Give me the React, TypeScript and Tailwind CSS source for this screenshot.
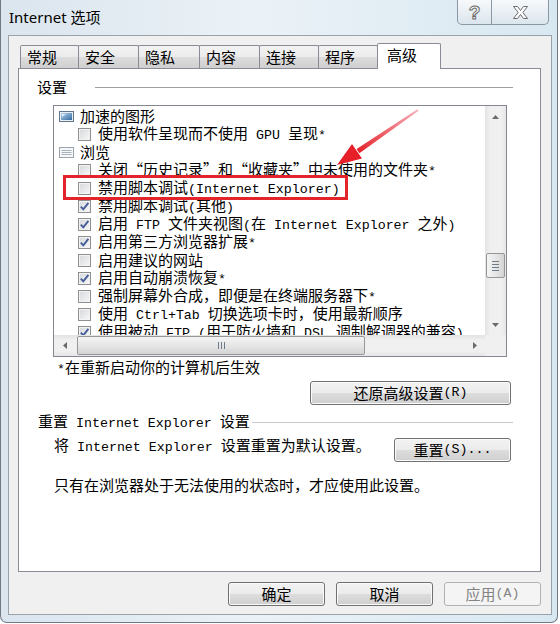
import React from "react";

const CJK = "font-['Noto_Sans_CJK_SC',sans-serif]";

// SimSun-like text: CJK at 15px, ASCII runs in half-width mono
function Txt({ s }: { s: string }) {
  const parts = s.match(/[\x20-\x7e]+|“|”|[^\x20-\x7e“”]+/g) ?? [];
  return (
    <>
      {parts.map((p, i) => {
        if (/^[\x20-\x7e]+$/.test(p))
          return (
            <span key={i} className="font-['Liberation_Mono',monospace] text-[13.3px] whitespace-pre">
              {p}
            </span>
          );
        if (p === "“")
          return (
            <span key={i} className="inline-block w-[15px] text-right">
              “
            </span>
          );
        if (p === "”")
          return (
            <span key={i} className="inline-block w-[15px] text-left">
              ”
            </span>
          );
        return <span key={i}>{p}</span>;
      })}
    </>
  );
}

type Row =
  | { kind: "cat"; icon: "gpu" | "page"; text: string }
  | { kind: "item"; checked: boolean; text: string };

const rows: Row[] = [
  { kind: "cat", icon: "gpu", text: "加速的图形" },
  { kind: "item", checked: false, text: "使用软件呈现而不使用 GPU 呈现*" },
  { kind: "cat", icon: "page", text: "浏览" },
  { kind: "item", checked: false, text: "关闭“历史记录”和“收藏夹”中未使用的文件夹*" },
  { kind: "item", checked: false, text: "禁用脚本调试(Internet Explorer)" },
  { kind: "item", checked: true, text: "禁用脚本调试(其他)" },
  { kind: "item", checked: true, text: "启用 FTP 文件夹视图(在 Internet Explorer 之外)" },
  { kind: "item", checked: true, text: "启用第三方浏览器扩展*" },
  { kind: "item", checked: false, text: "启用建议的网站" },
  { kind: "item", checked: true, text: "启用自动崩溃恢复*" },
  { kind: "item", checked: false, text: "强制屏幕外合成，即便是在终端服务器下*" },
  { kind: "item", checked: false, text: "使用 Ctrl+Tab 切换选项卡时，使用最新顺序" },
  { kind: "item", checked: true, text: "使用被动 FTP (用于防火墙和 DSL 调制解调器的兼容)" },
];

function CatIcon({ icon }: { icon: "gpu" | "page" }) {
  if (icon === "gpu")
    return (
      <svg width="15" height="11" viewBox="0 0 15 11">
        <defs>
          <linearGradient id="scr" x1="0" y1="0" x2="1" y2="1">
            <stop offset="0" stopColor="#b9d6f0" />
            <stop offset="1" stopColor="#2f679f" />
          </linearGradient>
        </defs>
        <rect x="0.5" y="0.5" width="14" height="10" fill="#e9eef3" stroke="#62758b" />
        <rect x="2" y="2" width="11" height="7" fill="url(#scr)" />
        <path d="M3 3 L7 3 L3 6 Z" fill="#ffffff" opacity="0.7" />
      </svg>
    );
  return (
    <svg width="15" height="11" viewBox="0 0 15 11">
      <rect x="0.5" y="0.5" width="14" height="10" fill="#f6f7f9" stroke="#9ba4ae" />
      <path d="M2.5 3.5 H12.5 M2.5 5.5 H12.5 M2.5 7.5 H12.5" stroke="#a9b1ba" />
    </svg>
  );
}

function Check({ on }: { on: boolean }) {
  return (
    <span className="ml-[24px] w-[13px] h-[13px] shrink-0 border border-[#8e8f8f] bg-[linear-gradient(135deg,#d5d8dc,#f7f7f7)] shadow-[inset_0_0_0_1px_#f3f3f3] flex items-center justify-center">
      {on && (
        <svg width="11" height="11" viewBox="0 0 11 11">
          <path d="M1.8 5.6 L4.3 8.3 L9.4 1.8" fill="none" stroke="#445c98" strokeWidth="1.9" />
        </svg>
      )}
    </span>
  );
}

function Btn({ className, children, disabled }: { className: string; children: React.ReactNode; disabled?: boolean }) {
  return (
    <div
      className={
        disabled
          ? `h-[24px] flex items-center justify-center rounded-[3px] border border-[#adb2b5] bg-[#f4f4f4] text-[#838383] ${className}`
          : `h-[24px] flex items-center justify-center rounded-[3px] border border-[#707070] bg-[linear-gradient(to_bottom,#f2f2f2_0%,#ebebeb_50%,#dddddd_50%,#cfcfcf_100%)] shadow-[inset_0_0_0_1px_#fbfbfb] ${className}`
      }
    >
      {children}
    </div>
  );
}

function Tab({ w, label }: { w: string; label: string }) {
  return (
    <div
      className={`h-[23px] -ml-px first:ml-0 border border-b-0 border-[#898c95] rounded-t-[2px] bg-[linear-gradient(to_bottom,#f3f3f3_0%,#ebebeb_50%,#dddddd_50%,#cfcfcf_100%)] pl-[6px] leading-[22px] ${w}`}
    >
      {label}
    </div>
  );
}

export default function App() {
  return (
    <div className={`relative w-[560px] h-[624px] bg-white overflow-hidden text-black ${CJK}`}>
      <div className="w-[558px] h-[623px] flex flex-col rounded-b-[7px] border-x border-b border-[#6f7a87] bg-[linear-gradient(to_right,#dbe5ee,#ebf2f7_45%,#d8e8f1)]">
        {/* title bar */}
        <div className="h-[35px] shrink-0 flex items-start">
          <div className="pl-[8px] pt-[7px] text-[15px] leading-[20px] font-['Noto_Sans','Noto_Sans_CJK_SC',sans-serif]">
            Internet 选项
          </div>
          <div className="ml-auto mr-[8px] flex h-[25px] border border-t-0 border-[#8b97a4] rounded-b-[5px] overflow-hidden bg-[linear-gradient(to_bottom,#f7f9fb,#dbe5ed)]">
            <div className="w-[34px] flex items-center justify-center border-r border-[#8b97a4] text-[19px] leading-none font-bold text-white font-['Liberation_Sans',sans-serif] [-webkit-text-stroke:1px_#6a6a6a]">
              ?
            </div>
            <div className="w-[56px] flex items-center justify-center">
              <svg width="17" height="15" viewBox="0 0 17 15">
                <polygon
                  points="1.5,1.5 5.5,1.5 8.5,5.5 11.5,1.5 15.5,1.5 10.8,7.5 15.5,13.5 11.5,13.5 8.5,9.5 5.5,13.5 1.5,13.5 6.2,7.5"
                  fill="#ffffff"
                  stroke="#6a6a6a"
                  strokeWidth="1"
                />
              </svg>
            </div>
          </div>
        </div>

        {/* client area */}
        <div className="ml-[7px] w-[544px] h-[580px] border border-[#9aa2aa] bg-[#f0f0f0] flex flex-col text-[15px] leading-[18px]">
          {/* tabs */}
          <div className="mt-[7px] ml-[11px] h-[25px] flex items-end">
            <Tab w="w-[59px]" label="常规" />
            <Tab w="w-[61px]" label="安全" />
            <Tab w="w-[62px]" label="隐私" />
            <Tab w="w-[61px]" label="内容" />
            <Tab w="w-[60px]" label="连接" />
            <Tab w="w-[60px]" label="程序" />
            <div className="relative z-10 -ml-px -mb-px h-[26px] w-[64px] border border-b-0 border-[#898c95] rounded-t-[2px] bg-white pl-[9px] leading-[22px]">
              高级
            </div>
          </div>

          {/* tab page */}
          <div className="ml-[9px] w-[523px] h-[504px] border border-[#898c95] bg-white flex flex-col">
            <div className="mt-[9px] h-[18px] flex items-center pl-[18px]">
              <span>设置</span>
              <div className="flex-1 ml-[28px] mr-[27px] border-t border-[#a0a0a0]" />
            </div>

            {/* list box */}
            <div className="mt-[9px] ml-[34px] w-[454px] h-[252px] border border-[#828790] grid grid-cols-[431px_21px] grid-rows-[229px_21px]">
              <div className="overflow-hidden pt-[1px]">
                {rows.map((r, i) => (
                  <div key={i} className="h-[18px] flex items-center whitespace-nowrap">
                    {r.kind === "cat" ? (
                      <>
                        <span className="ml-[5px] w-[15px] h-[11px] shrink-0 flex">
                          <CatIcon icon={r.icon} />
                        </span>
                        <span className="ml-[6px]">
                          <Txt s={r.text} />
                        </span>
                      </>
                    ) : (
                      <>
                        <Check on={r.checked} />
                        <span className="ml-[7px]">
                          <Txt s={r.text} />
                        </span>
                      </>
                    )}
                  </div>
                ))}
              </div>

              {/* vertical scrollbar */}
              <div className="flex flex-col bg-[linear-gradient(to_right,#e3e3e3,#f0f0f0_25%,#f0f0f0_75%,#e6e6e6)]">
                <div className="h-[21px] flex items-center justify-center">
                  <svg width="7" height="4" viewBox="0 0 7 4">
                    <polygon points="0,4 3.5,0 7,4" fill="#6a6a6a" />
                  </svg>
                </div>
                <div className="h-[126px]" />
                <div className="mx-[1px] h-[25px] rounded-[2px] border border-[#979797] bg-[linear-gradient(to_right,#f4f4f4,#e6e6e6_50%,#d4d4d4)] flex flex-col items-center justify-center gap-[2px]">
                  <div className="w-[7px] h-[1px] bg-[#6e7b8a]" />
                  <div className="w-[7px] h-[1px] bg-[#6e7b8a]" />
                  <div className="w-[7px] h-[1px] bg-[#6e7b8a]" />
                  <div className="w-[7px] h-[1px] bg-[#6e7b8a]" />
                </div>
                <div className="flex-1" />
                <div className="h-[21px] flex items-center justify-center">
                  <svg width="7" height="4" viewBox="0 0 7 4">
                    <polygon points="0,0 7,0 3.5,4" fill="#6a6a6a" />
                  </svg>
                </div>
              </div>

              {/* horizontal scrollbar */}
              <div className="flex items-center bg-[linear-gradient(to_bottom,#e3e3e3,#f0f0f0_25%,#f0f0f0_75%,#e6e6e6)]">
                <div className="w-[21px] h-full flex items-center justify-center">
                  <svg width="4" height="7" viewBox="0 0 4 7">
                    <polygon points="4,0 0,3.5 4,7" fill="#6a6a6a" />
                  </svg>
                </div>
                <div className="w-[2px]" />
                <div className="w-[288px] h-[19px] rounded-[2px] border border-[#979797] bg-[linear-gradient(to_bottom,#f4f4f4,#e6e6e6_50%,#d4d4d4)] flex items-center justify-center gap-[2px]">
                  <div className="w-[1px] h-[7px] bg-[#6e7b8a]" />
                  <div className="w-[1px] h-[7px] bg-[#6e7b8a]" />
                  <div className="w-[1px] h-[7px] bg-[#6e7b8a]" />
                </div>
                <div className="flex-1" />
                <div className="w-[21px] h-full flex items-center justify-center">
                  <svg width="4" height="7" viewBox="0 0 4 7">
                    <polygon points="0,0 4,3.5 0,7" fill="#6a6a6a" />
                  </svg>
                </div>
              </div>
              <div className="bg-[#f0f0f0]" />
            </div>

            <div className="mt-[1px] pl-[38px] h-[18px] whitespace-nowrap">
              <Txt s="*在重新启动你的计算机后生效" />
            </div>

            <div className="mt-[5px] self-end mr-[29px]">
              <Btn className="w-[201px]">
                <Txt s="还原高级设置(R)" />
              </Btn>
            </div>

            <div className="mt-[8px] h-[18px] flex items-center pl-[19px] whitespace-nowrap">
              <span>
                <Txt s="重置 Internet Explorer 设置" />
              </span>
              <div className="flex-1 ml-[2px] mr-[27px] border-t border-[#c8c8c8]" />
            </div>

            <div className="mt-[5px] flex items-start justify-between">
              <div className="pl-[35px] h-[18px] whitespace-nowrap">
                <Txt s="将 Internet Explorer 设置重置为默认设置。" />
              </div>
              <div className="mt-[2px] mr-[29px]">
                <Btn className="w-[117px]">
                  <Txt s="重置(S)..." />
                </Btn>
              </div>
            </div>

            <div className="mt-[14px] pl-[35px] h-[18px] whitespace-nowrap">
              只有在浏览器处于无法使用的状态时，才应使用此设置。
            </div>
          </div>

          {/* dialog buttons */}
          <div className="mt-[10px] flex justify-end gap-[11px] pr-[10px]">
            <Btn className="w-[97px]">确定</Btn>
            <Btn className="w-[97px]">取消</Btn>
            <Btn className="w-[97px]" disabled>
              <Txt s="应用(A)" />
            </Btn>
          </div>
        </div>
      </div>

      {/* annotation: red box + arrow */}
      <div className="absolute left-[63px] top-[175px] w-[285px] h-[25px] border-[3px] border-[#e3242b]" />
      <svg className="absolute left-0 top-0 pointer-events-none" width="560" height="624">
        <defs>
          <linearGradient id="ag" x1="418" y1="110" x2="356" y2="152" gradientUnits="userSpaceOnUse">
            <stop offset="0" stopColor="#f6b2bb" />
            <stop offset="1" stopColor="#e61f28" />
          </linearGradient>
        </defs>
        <path d="M417.4 109.2 L418.6 110.8 L359.4 153.2 L356.6 149 Z" fill="url(#ag)" />
        <polygon points="337,165 362,158.5 352,144" fill="#e61f28" />
      </svg>
    </div>
  );
}
